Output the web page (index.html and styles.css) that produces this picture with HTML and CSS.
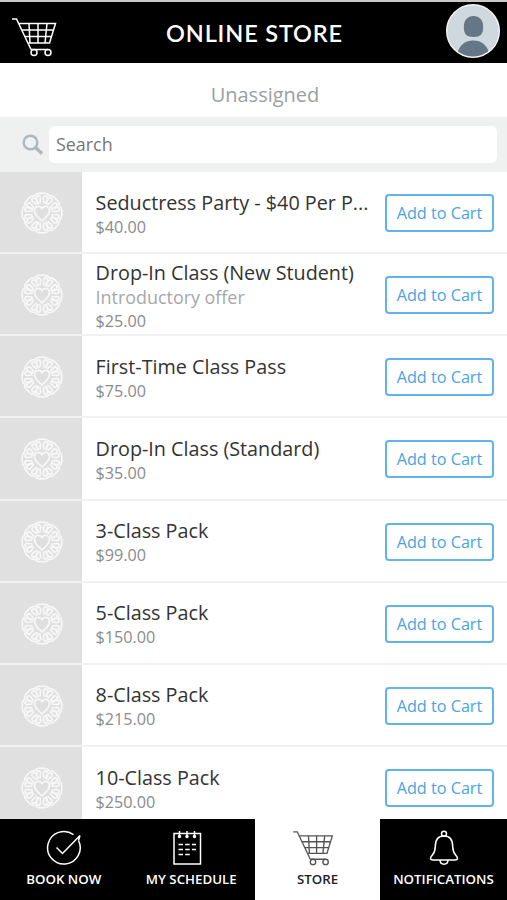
FILE: index.html
```html
<!DOCTYPE html>
<html lang="en">
<head>
<meta charset="utf-8">
<title>Online Store</title>
<link rel="stylesheet" href="styles.css">
</head>
<body>
<svg class="defs" width="0" height="0">
  <symbol id="cart" viewBox="0 0 46 40">
    <path d="M1 2h4.500L20 32.500M8 6.500h36.500L38.500 26H17M10.500 13h32M13.500 19.500h27M18 6.500L19 26M27 6.500V26M36 6.500L34 26M20 32.500h17"/>
    <circle cx="23" cy="35.500" r="3"/><circle cx="37" cy="35.500" r="3"/>
  </symbol>
  <symbol id="flower" viewBox="-21 -21 42 42">
    <g id="lobe">
      <path d="M-7 -16.900C-6.500 -20.800 6.500 -20.800 7 -16.900"/>
      <path d="M-3.500 -9L-5.600 -14C-6 -17.500 -1.500 -18.500 -1.500 -14.500L-2 -9.500M3.500 -9L5.600 -14C6 -17.500 1.500 -18.500 1.500 -14.500L2 -9.500"/>
    </g>
    <use href="#lobe" transform="rotate(45)"/>
    <use href="#lobe" transform="rotate(90)"/>
    <use href="#lobe" transform="rotate(135)"/>
    <use href="#lobe" transform="rotate(180)"/>
    <use href="#lobe" transform="rotate(225)"/>
    <use href="#lobe" transform="rotate(270)"/>
    <use href="#lobe" transform="rotate(315)"/>
    <path fill="#dfdfdf" d="M0 8C-3 5-7.500 2-7.500-2.500C-7.500-7-2-8 0-4.500C2-8 7.500-7 7.500-2.500C7.500 2 3 5 0 8z"/>
  </symbol>
</svg>
<div class="app">
  <header class="topbar">
    <svg class="cart"><use href="#cart"/></svg>
    <h1>ONLINE STORE</h1>
    <svg class="avatar" viewBox="0 0 54 54">
      <clipPath id="face"><circle cx="27" cy="27" r="25.500"/></clipPath>
      <circle cx="27" cy="27" r="26.300" fill="#cfd8df" stroke="#f4f6f7" stroke-width="1.400"/>
      <g clip-path="url(#face)" fill="#657786">
        <path d="M27.500 12c6 0 9.700 4 9.700 11 0 7-2.700 10-9.700 10s-9.700-3-9.700-10c0-7 3.700-11 9.700-11z"/>
        <path d="M11 54.500c0-12 7-18 16.300-18S43.500 42.500 43.500 54.500z"/>
      </g>
    </svg>
  </header>
  <div class="location"><span>Unassigned</span></div>
  <div class="search">
    <svg class="lens" viewBox="0 0 22 22"><circle cx="8.500" cy="8.500" r="6.800"/><path d="M13.500 13.500l6.500 6" stroke-width="3.400"/></svg>
    <div class="field"><span>Search</span></div>
  </div>
  <main class="list">
    <article class="item"><div class="thumb"><svg><use href="#flower"/></svg></div><div class="info"><h2>Seductress Party - $40 Per P...</h2><p>$40.00</p></div><button>Add to Cart</button></article>
    <article class="item"><div class="thumb"><svg><use href="#flower"/></svg></div><div class="info"><h2>Drop-In Class (New Student)</h2><p class="offer">Introductory offer</p><p>$25.00</p></div><button>Add to Cart</button></article>
    <article class="item"><div class="thumb"><svg><use href="#flower"/></svg></div><div class="info"><h2>First-Time Class Pass</h2><p>$75.00</p></div><button>Add to Cart</button></article>
    <article class="item"><div class="thumb"><svg><use href="#flower"/></svg></div><div class="info"><h2>Drop-In Class (Standard)</h2><p>$35.00</p></div><button>Add to Cart</button></article>
    <article class="item"><div class="thumb"><svg><use href="#flower"/></svg></div><div class="info"><h2>3-Class Pack</h2><p>$99.00</p></div><button>Add to Cart</button></article>
    <article class="item"><div class="thumb"><svg><use href="#flower"/></svg></div><div class="info"><h2>5-Class Pack</h2><p>$150.00</p></div><button>Add to Cart</button></article>
    <article class="item"><div class="thumb"><svg><use href="#flower"/></svg></div><div class="info"><h2>8-Class Pack</h2><p>$215.00</p></div><button>Add to Cart</button></article>
    <article class="item"><div class="thumb"><svg><use href="#flower"/></svg></div><div class="info"><h2>10-Class Pack</h2><p>$250.00</p></div><button>Add to Cart</button></article>
  </main>
  <nav class="tabs">
    <a class="tab"><svg viewBox="0 0 36 36"><path d="M27.500 4.600A16.300 16.300 0 1 0 32.500 10.500M10.500 17.500l6 6L34 5.500l-1.500 5"/></svg><span>BOOK NOW</span></a>
    <a class="tab schedule"><svg viewBox="0 0 36 36"><path d="M5 3.500h26.500v30.500H5zM10.500 1v6M18 1v6M25.500 1v6"/><path d="M9.500 14.500h17.500M9.500 19.500h17.500M9.500 24.500h12" stroke-dasharray="4.500 2.200"/><g fill="currentColor" stroke="none"><circle cx="10.500" cy="6.500" r="1.700"/><circle cx="18" cy="6.500" r="1.700"/><circle cx="25.500" cy="6.500" r="1.700"/></g></svg><span>MY SCHEDULE</span></a>
    <a class="tab active"><svg class="cart"><use href="#cart"/></svg><span>STORE</span></a>
    <a class="tab"><svg viewBox="0 0 36 36"><circle cx="18" cy="3.700" r="2.500"/><path d="M18 6C11.500 6 9.300 11 9.300 16.500 9.300 23 7 24 4.800 27.200 4 29 5 30 7 30h22c2 0 3-1 2.200-2.800C29 24 26.700 23 26.700 16.500 26.700 11 24.500 6 18 6zM14 30c0 5.500 8 5.500 8 0"/></svg><span>NOTIFICATIONS</span></a>
  </nav>
</div>
</body>
</html>
```
FILE: styles.css
```css
* { box-sizing: border-box; }
body, h1, h2, p { margin: 0; }
body { background: #fff; font-family: "Open Sans", "Noto Sans", sans-serif; }
svg { display: block; flex: none; fill: none; stroke: currentColor; stroke-width: 1.5; }
.defs { position: absolute; }
.app { display: flex; flex-direction: column; width: 507px; height: 900px; overflow: hidden; }

.topbar {
  flex: none; display: flex; align-items: center; justify-content: space-between;
  height: 63px; padding: 0 7px 0 11px;
  border-top: 2px solid #c9c9c9; background: #000; color: #fff;
}
.topbar .cart { width: 46px; height: 40px; margin-top: 9px; }
.topbar h1 {
  padding-left: 6px; font-family: Lato, "Open Sans", sans-serif; font-size: 23.5px; font-weight: 600;
  line-height: 30px; letter-spacing: .85px; white-space: nowrap;
}
.avatar { width: 54px; height: 54px; margin-bottom: 4px; stroke: none; }

.location {
  flex: none; display: flex; align-items: center; justify-content: center;
  height: 54px; padding: 10px 0 0 23px; color: #9b9fa0; font-size: 20px; line-height: 28px;
}
.search {
  flex: none; display: flex; align-items: center; gap: 5px;
  height: 55px; padding: 0 10px 0 22px; background: #eff1f1;
}
.lens { width: 22px; height: 22px; color: #adb8be; stroke-width: 2.4; }
.field {
  flex: 1; height: 37px; padding: 0 7px; border-radius: 6px;
  background: #fff; color: #777; font-size: 17.9px; line-height: 36px;
}

.list { flex: 1; min-height: 0; overflow: hidden; }
.item {
  display: flex; align-items: center; height: 82.15px; padding-right: 13px;
  border-bottom: 2px solid #f0f2f2;
}
.thumb {
  display: flex; align-items: center; justify-content: center;
  flex: none; width: 82px; height: 100%; padding: 2px 0 0 2px; background: #e0e0e0;
}
.thumb svg { width: 42px; height: 42px; color: #f8f8f8; stroke-width: 1.7; }
.info { flex: 1; min-width: 0; padding: 5px 0 0 13.6px; white-space: nowrap; }
.info h2 { color: #333; font-size: 19.75px; font-weight: 400; line-height: 24px; }
.info p { color: #8b8b8b; font-size: 16.2px; line-height: 24px; }
.info .offer { color: #a5a8a9; font-size: 17.9px; line-height: 24px; }
.item button {
  flex: none; width: 109px; height: 38px; margin-top: 2px; padding: 0; border: 2px solid #62b2ec;
  border-radius: 4px; background: #fff; color: #4aa3e3; font: 16.2px "Open Sans", sans-serif;
}

.tabs { flex: none; display: flex; height: 81px; background: #000; color: #fff; }
.tab { flex: none; display: flex; flex-direction: column; align-items: center; width: 127px; padding-top: 11px; }
.tab:nth-child(-n+2) { width: 127.5px; }
.tab svg { width: 36px; height: 36px; }
.schedule svg { margin-right: 8px; }
.tab.active { width: 125px; background: #fff; color: #222; }
.tab .cart { width: 42px; height: 36px; margin-right: 9px; color: #555; }
.tab span { margin-top: 4px; font-size: 13.3px; font-weight: 600; line-height: 18px; white-space: nowrap; }
```
